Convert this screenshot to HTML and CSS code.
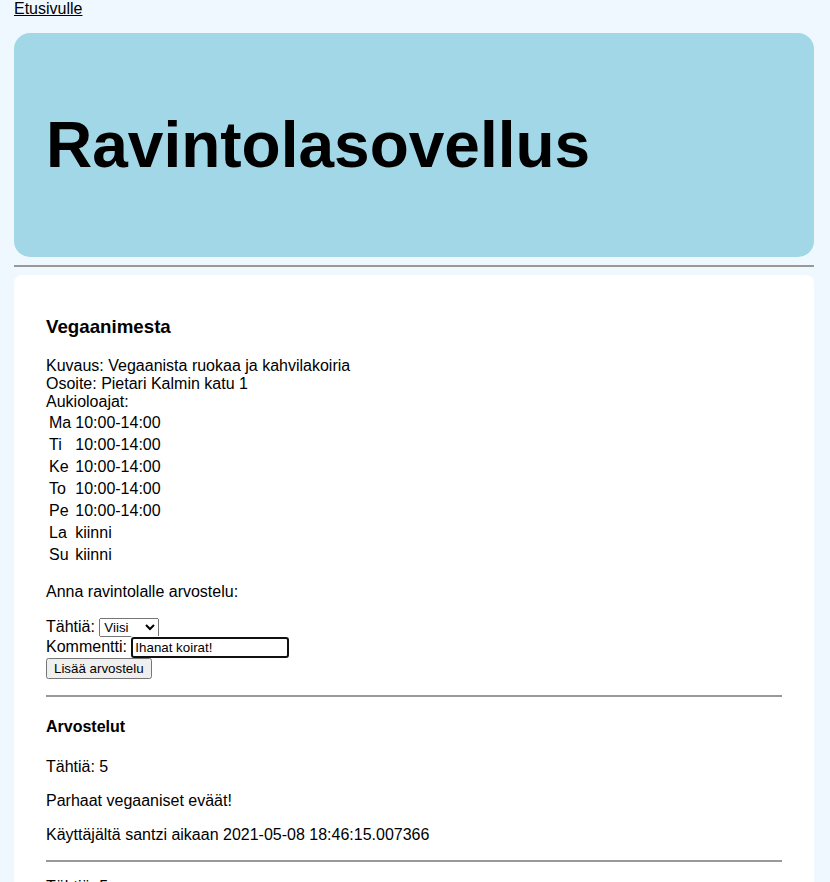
FILE: index.html
```html
<!DOCTYPE html>
<html lang="fi">
<head>
<meta charset="utf-8">
<title>Ravintolasovellus</title>
<link rel="stylesheet" href="styles.css">
</head>
<body>
<nav class="nav"><a href="#">Etusivulle</a></nav>
<header class="header">
  <h1>Ravintolasovellus</h1>
</header>
<hr class="divider">
<main class="content">
  <h3>Vegaanimesta</h3>
  Kuvaus: Vegaanista ruokaa ja kahvilakoiria<br>
  Osoite: Pietari Kalmin katu 1<br>
  Aukioloajat:<br>
  <table class="hours">
    <tr><td>Ma</td><td>10:00-14:00</td></tr>
    <tr><td>Ti</td><td>10:00-14:00</td></tr>
    <tr><td>Ke</td><td>10:00-14:00</td></tr>
    <tr><td>To</td><td>10:00-14:00</td></tr>
    <tr><td>Pe</td><td>10:00-14:00</td></tr>
    <tr><td>La</td><td>kiinni</td></tr>
    <tr><td>Su</td><td>kiinni</td></tr>
  </table>
  <p>Anna ravintolalle arvostelu:</p>
  <form class="review-form">
    Tähtiä: <select name="stars">
      <option value="5" selected>Viisi</option>
      <option value="4">Neljä</option>
      <option value="3">Kolme</option>
      <option value="2">Kaksi</option>
      <option value="1">Yksi</option>
    </select><br>
    Kommentti: <input class="comment" type="text" name="comment" value="Ihanat koirat!" autofocus><br>
    <input type="submit" value="Lisää arvostelu">
  </form>
  <hr class="rule">
  <h4>Arvostelut</h4>
  <p>Tähtiä: 5</p>
  <p>Parhaat vegaaniset eväät!</p>
  <p>Käyttäjältä santzi aikaan 2021-05-08 18:46:15.007366</p>
  <hr class="rule">
  <p>Tähtiä: 5</p>
  <p>Ihanat koirat!</p>
  <p>Käyttäjältä santzi aikaan 2021-05-08 18:50:02.113842</p>
  <hr class="rule">
</main>
</body>
</html>
```
FILE: styles.css
```css
html {
  background: #f0f8ff;
}
body {
  margin: 0;
  padding: 0 14px 20px 14px;
  font-family: "Liberation Sans", Arial, sans-serif;
  font-size: 16px;
  color: #000;
  background: #f0f8ff;
}
.nav {
  height: 18px;
}
.nav a {
  color: #000;
}
.header {
  width: 800px;
  margin-top: 15px;
  padding: 32px;
  box-sizing: border-box;
  background: #a1d7e7;
  border-radius: 16px;
}
.header h1 {
  margin: 0.67em 0;
  font-size: 64px;
  font-weight: bold;
}
.divider {
  width: 800px;
  margin: 8px 0;
  border: 0;
  border-top: 2px solid #999;
  box-sizing: border-box;
}
.content {
  width: 800px;
  box-sizing: border-box;
  padding: 23px 32px 20px 32px;
  background: #fff;
  border-radius: 8px;
}
.content h3 {
  font-size: 1.17em;
  margin: 18.72px 0;
}
.content h4 {
  font-size: 16px;
  margin: 21.28px 0;
}
.hours {
  border-spacing: 2px;
}
.hours td {
  padding: 1px;
}
.review-form {
  margin-bottom: 16px;
  line-height: 20px;
}
.review-form select {
  font-family: "Liberation Sans", Arial, sans-serif;
  font-size: 13.33px;
}
.review-form input {
  font-family: "Liberation Sans", Arial, sans-serif;
  font-size: 13.33px;
}
.review-form .comment {
  width: 158px;
  height: 21px;
  box-sizing: border-box;
}
.rule {
  margin: 8px 0;
  border: 0;
  border-top: 2px solid #999;
}
```
